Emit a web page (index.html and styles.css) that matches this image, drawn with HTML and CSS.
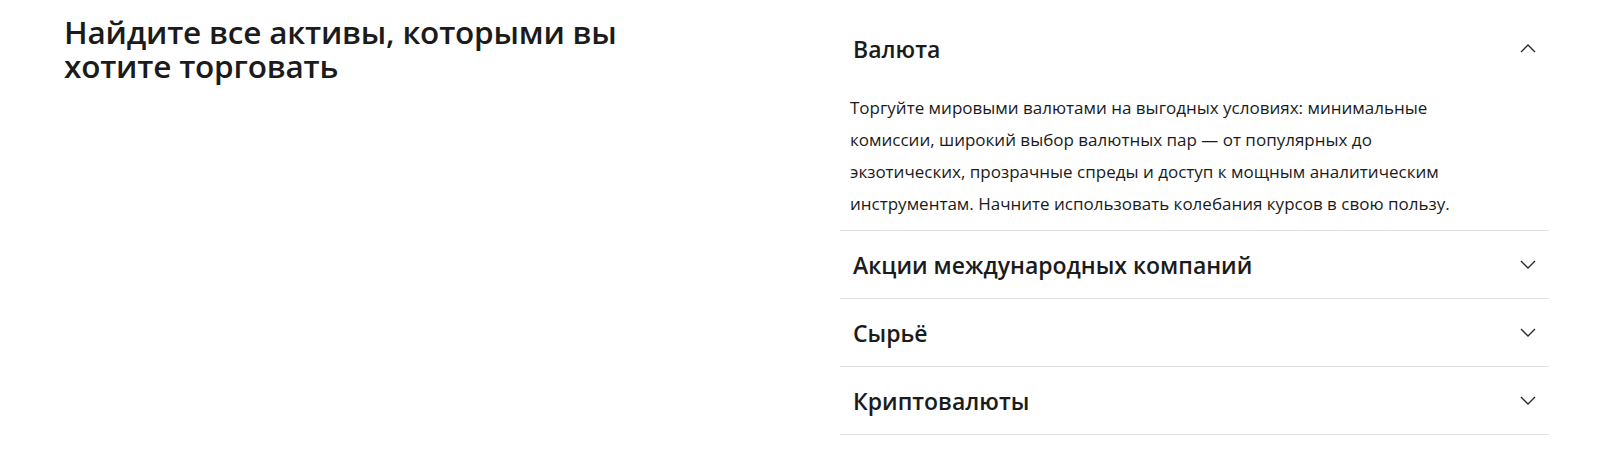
FILE: index.html
```html
<!DOCTYPE html>
<html lang="ru">
<head>
    <meta charset="UTF-8">
    <meta name="viewport" content="width=device-width, initial-scale=1.0">
    <title>Активы</title>
    <link rel="stylesheet" href="styles.css">
</head>
<body>
    <section class="assets">
        <h2 class="assets-title">Найдите все активы, которыми вы хотите торговать</h2>

        <div class="accordion">
            <div class="acc-item open">
                <div class="acc-head">
                    <span class="acc-name">Валюта</span>
                    <svg class="acc-arrow" width="16" height="9" viewBox="0 0 16 9"><path d="M1 8l7-7 7 7"/></svg>
                </div>
                <div class="acc-body">
                    Торгуйте мировыми валютами на выгодных условиях: минимальные комиссии, широкий выбор валютных пар — от популярных до экзотических, прозрачные спреды и доступ к мощным аналитическим инструментам. Начните использовать колебания курсов в свою пользу.
                </div>
            </div>
            <div class="acc-item">
                <div class="acc-head">
                    <span class="acc-name">Акции международных компаний</span>
                    <svg class="acc-arrow" width="16" height="9" viewBox="0 0 16 9"><path d="M1 1l7 7 7-7"/></svg>
                </div>
            </div>
            <div class="acc-item">
                <div class="acc-head">
                    <span class="acc-name">Сырьё</span>
                    <svg class="acc-arrow" width="16" height="9" viewBox="0 0 16 9"><path d="M1 1l7 7 7-7"/></svg>
                </div>
            </div>
            <div class="acc-item">
                <div class="acc-head">
                    <span class="acc-name">Криптовалюты</span>
                    <svg class="acc-arrow" width="16" height="9" viewBox="0 0 16 9"><path d="M1 1l7 7 7-7"/></svg>
                </div>
            </div>
        </div>
    </section>
</body>
</html>
```

FILE: styles.css
```css
:root {
    --text: #1b1b1b;
    --line: #e2e2e2;
}

body {
    margin: 0;
    background: #fff;
    color: var(--text);
    font-family: "Open Sans", "Liberation Sans", sans-serif;
}

.assets {
    display: grid;
    grid-template-columns: 1fr 709px;
    padding: 15px 51px 0 64px;
}

.assets-title {
    margin: 0;
    max-width: 600px;
    font-size: 31.5px;
    line-height: 34px;
    font-weight: 600;
    letter-spacing: -0.2px;
}

.acc-item {
    border-bottom: 1px solid var(--line);
}

.acc-head {
    height: 67px;
    display: flex;
    align-items: center;
    justify-content: space-between;
    padding: 0 13px;
}

.acc-name {
    font-size: 23px;
    font-weight: 600;
}

.acc-arrow {
    fill: none;
    stroke: #2a2a2a;
    stroke-width: 1.4;
}

.acc-body {
    padding: 10px 75px 10px 10px;
    font-size: 17px;
    line-height: 32px;
}
```
